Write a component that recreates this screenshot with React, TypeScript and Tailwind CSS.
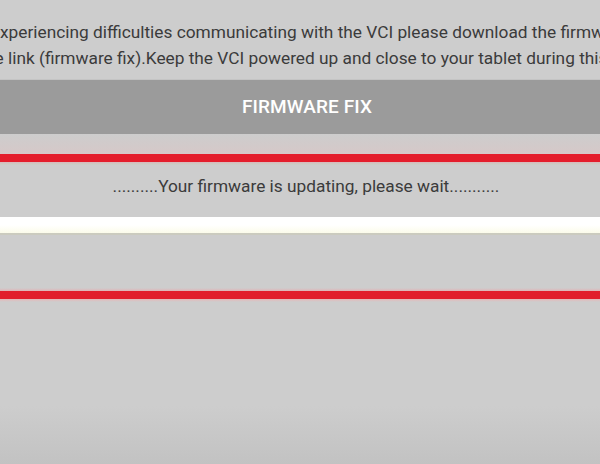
import React from "react";

export default function App() {
  return (
    <div
      className="w-[600px] h-[464px] overflow-hidden flex flex-col bg-[#cdcdcd] text-[#3b3b3b]"
      style={{ fontFamily: "Roboto, 'Noto Sans', sans-serif" }}
    >
      <div className="h-[19px] shrink-0" />
      <div className="flex flex-col text-[17.3px] leading-[26px] overflow-hidden">
        <div className="flex whitespace-nowrap">
          <span className="shrink-0">xperiencing difficulties communicating with the VCI please download the firmware</span>
        </div>
        <div className="flex whitespace-nowrap">
          <span className="w-[8px] shrink-0 overflow-hidden flex justify-end">
            <span className="shrink-0">the&nbsp;</span>
          </span>
          <span className="shrink-0">link (firmware fix).Keep the VCI powered up and close to your tablet during this process.</span>
        </div>
      </div>
      <div className="h-[9px] shrink-0 border-b border-[#c4c4c4]" />
      <div className="h-[54px] shrink-0 bg-[#9b9b9b] flex items-center justify-center pl-[14px]">
        <span className="text-white text-[19px] font-medium tracking-[0.1px]">FIRMWARE FIX</span>
      </div>
      <div className="h-[20px] shrink-0 bg-gradient-to-b from-[#cdcdcd] to-[#d6c8c8]" />
      <div className="h-[8px] shrink-0 bg-[#e41d2c]" />
      <div className="h-[3px] shrink-0 bg-gradient-to-b from-[#d8b8bb] to-[#c8d2c8]" />
      <div className="h-[52px] shrink-0 flex items-center justify-center text-[17.3px] pb-[8px] pl-[12px]">
        ..........Your firmware is updating, please wait...........
      </div>
      <div className="h-[16px] shrink-0 bg-gradient-to-b from-[#ffffff] via-[#ffffff] to-[#fbfbea]" />
      <div className="h-[2px] shrink-0 bg-[#cbcbbf]" />
      <div className="h-[53px] shrink-0" />
      <div className="h-[3px] shrink-0 bg-gradient-to-b from-[#cdcdcd] to-[#e0b3b6]" />
      <div className="h-[8px] shrink-0 bg-[#e11f2d]" />
      <div className="h-[3px] shrink-0 bg-gradient-to-b from-[#e4b7b9] to-[#cdcdcd]" />
      <div className="h-[104px] shrink-0" />
      <div className="flex-1 bg-gradient-to-b from-[#cdcdcd] to-[#c2c2c2]" />
    </div>
  );
}
